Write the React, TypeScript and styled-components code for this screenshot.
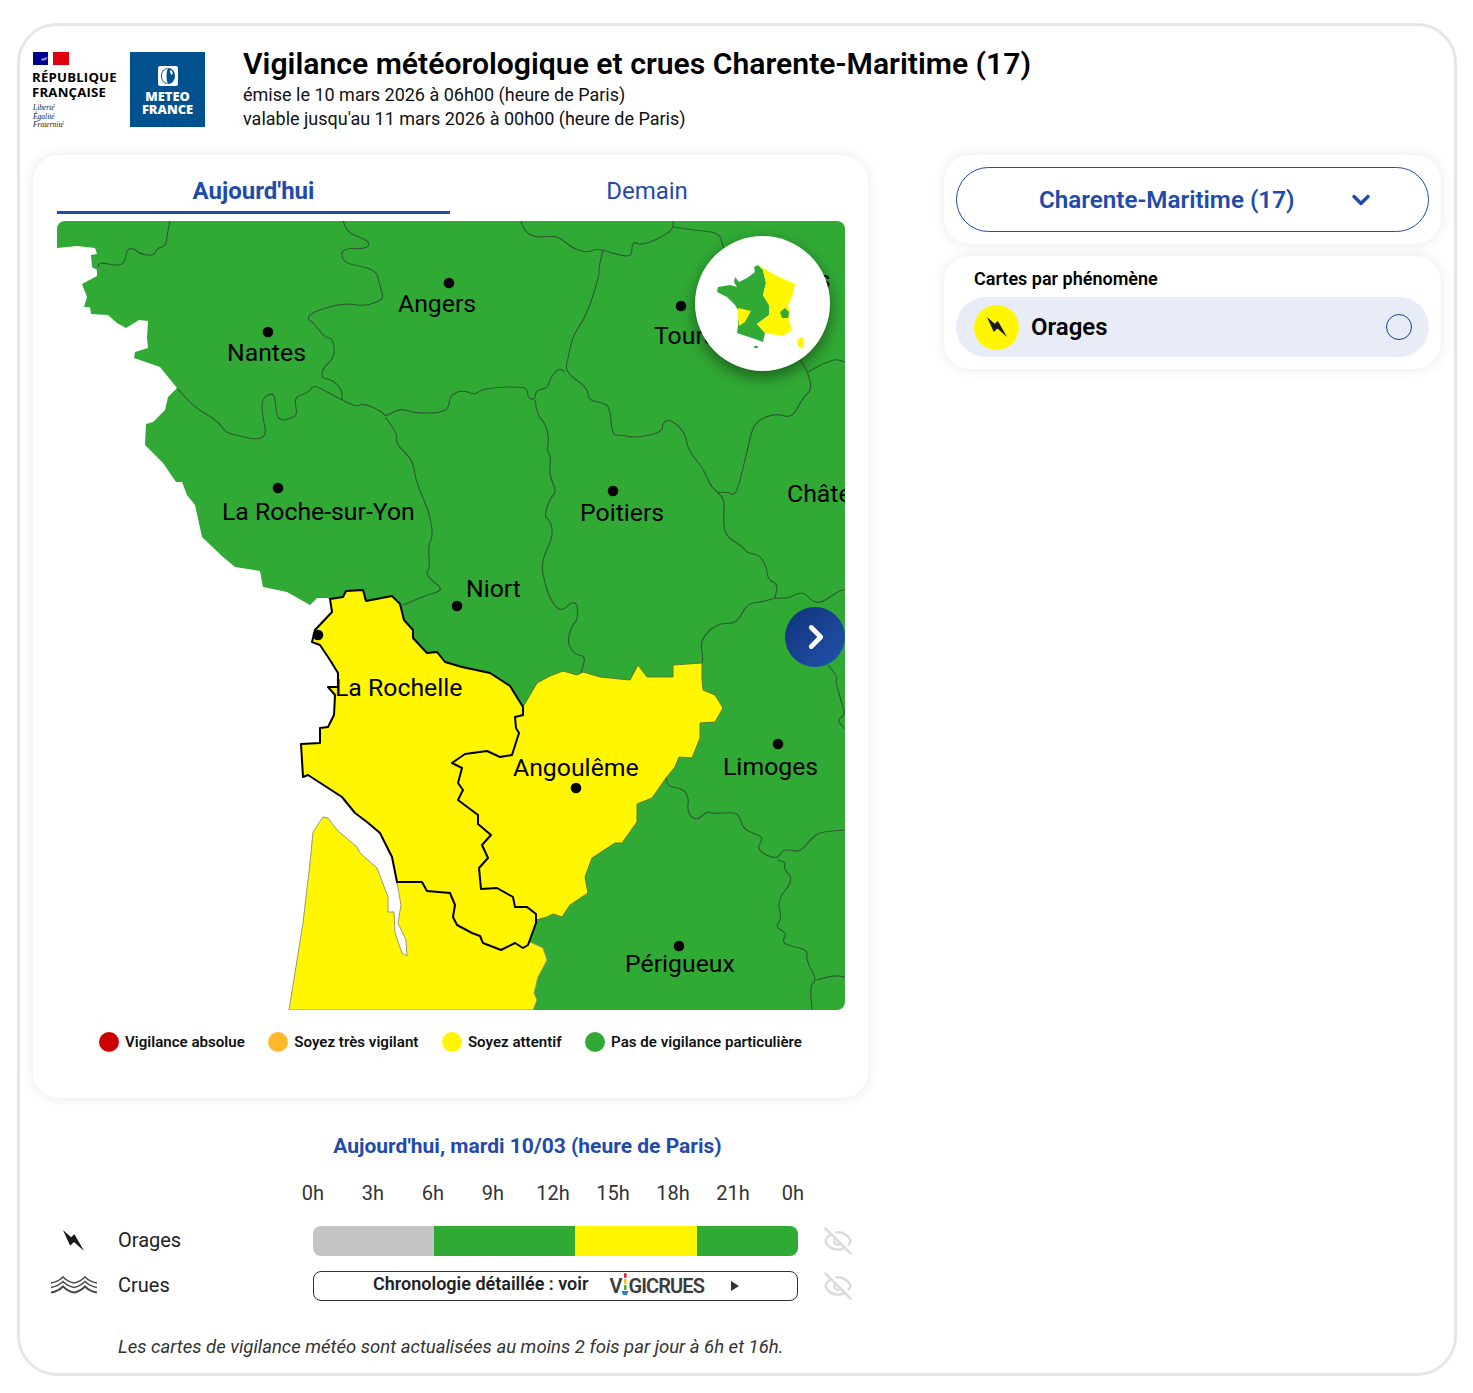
import React from 'react';
import styled, { createGlobalStyle } from 'styled-components';
import { ChevronDown, ChevronRight, EyeOff } from 'lucide-react';

// --- Colours ---

const BLUE = '#1f4bab';
const GREEN = '#31aa35';
const YELLOW = '#fff600';

// --- Map data, in page pixels (the svg viewBox starts at the map's corner) ---

const COAST =
  '57,221 845,221 845,1010 533,1010 400,700 328,598 317,598 310,605 287,592 263,587 260,571 235,567 223,557 202,537 195,505 187,495 182,482 176,482 163,463 145,445 146,424 153,422 165,410 168,397 177,388 160,367 134,358 135,352 148,348 147,338 148,321 139,320 126,328 117,323 108,315 91,314 90,307 84,307 87,297 82,284 97,276 97,270 92,267 91,255 97,254 95,248 77,246 57,248';

const GIRONDE =
  '397,882 422,882 427,891 450,893 455,905 453,917 457,925 472,933 480,936 483,943 501,950 515,943 523,948 528,945 530,942 543,948 547,960 538,977 534,993 537,1000 533,1010 289,1010 303,923 310,863 313,832 323,817 328,818 337,830 357,847 360,853 377,868 388,897 388,912 394,912 395,933 402,953 407,956 406,940 398,923 401,905';

const CHARENTE =
  '523,707 530,695 537,683 550,676 563,671 577,675 583,672 600,677 630,680 638,665 647,677 673,677 673,665 702,663 702,680 703,690 715,695 723,708 715,722 700,723 700,738 692,758 679,757 675,767 666,778 652,798 637,804 637,822 622,843 615,843 592,858 585,877 588,893 570,905 562,917 553,914 547,917 536,920 536,914 527,907 515,907 513,897 497,888 481,889 479,868 488,858 482,845 491,835 478,824 478,815 458,800 463,790 458,783 462,768 452,763 465,754 487,751 500,757 512,755 519,733 516,728 515,717 523,715';

const CHARENTE_MARITIME =
  '330,599 343,597 346,591 363,590 366,601 392,596 400,604 404,620 413,630 413,638 427,653 437,652 445,662 462,667 490,673 510,686 523,707 523,715 515,717 516,728 519,733 512,755 500,757 487,751 465,754 452,763 462,768 458,783 463,790 458,800 478,815 478,824 491,835 482,845 488,858 479,868 481,889 497,888 513,897 515,907 527,907 536,914 536,923 528,945 523,948 515,943 501,950 483,943 480,936 472,933 457,925 453,917 455,905 450,893 427,891 422,882 397,882 392,857 380,833 367,822 355,813 342,797 308,775 303,777 301,744 320,743 320,728 328,727 334,715 335,695 328,687 338,687 338,673 330,660 320,645 312,642 315,630 332,612';

const BORDERS = [
  '170,221 167,235 166,246 157,248 154,256 140,254 135,249 127,248 125,263 117,266 100,262 98,267',
  '343,221 347,232 357,236 370,242 367,249 341,248 343,263 365,267 377,272 380,287 384,298 375,303 363,306 343,303 312,312 307,319 313,322 325,338 333,338 335,357 323,368 321,378 333,380 342,390 342,400',
  '177,388 193,407 217,420 225,432 235,435 257,440 267,435 262,415 262,398 272,393 275,397 277,422 295,417 297,412 294,397 308,393 313,386 318,387 342,400 357,407 363,403 383,412 385,417 400,408 413,413 440,413 449,408 450,395 463,390 475,395 480,390 500,387 518,387 527,388 528,398 535,400 536,390 548,388 550,378 559,368 565,372',
  '385,417 398,433 395,443 413,460 415,478 423,498 430,515 433,537 428,545 430,568 425,575 442,588 438,592 427,595 403,605',
  '535,400 537,415 545,423 549,437 547,452 551,455 549,475 557,492 550,498 544,517 550,520 553,533 549,545 541,563 545,585 552,603 562,612 572,601 578,605 577,621 572,625 567,643 575,655 586,656 581,673',
  '521,221 523,230 535,238 557,235 572,248 588,253 597,248 622,256 632,256 632,241 643,246 673,231 673,221',
  '673,227 695,230 720,233 722,245 730,260',
  '603,250 598,270 600,273 587,315 573,335 568,358 565,372 588,388 588,400 603,403 610,407 612,435 620,435 637,438 663,432 662,423 670,419 685,432 688,450 703,468 710,485 717,492 725,500 723,525 727,537 743,547 747,553 760,555 767,568 768,580 778,584 775,598',
  '717,492 730,492 732,496 738,490 750,438 755,422 775,413 790,418 798,408 803,397 812,390 808,372 800,360',
  '808,372 832,358 845,362',
  '775,598 787,599 798,593 805,593 817,606 840,590 845,590',
  '775,598 763,602 747,603 737,624 717,623 700,640 703,657 702,663',
  '828,665 838,677 835,680 843,707 845,715 837,720 845,729',
  '666,778 667,787 682,788 689,797 687,813 697,821 707,811 713,814 735,812 740,817 743,828 752,833 764,837 756,850 777,860 782,850 792,850 800,852 812,838 820,832 845,830',
  '777,860 787,862 783,868 794,880 777,900 782,918 775,927 787,933 782,942 790,946 808,950 806,960 817,980 810,985 812,1010',
  '817,980 833,975 845,977',
];

const CITIES = [
  { name: 'Nantes', dot: [268, 332], label: [227, 361] },
  { name: 'Angers', dot: [449, 283], label: [398, 312] },
  { name: 'Tours', dot: [681, 306], label: [654, 344] },
  { name: 'Blois', dot: [790, 262], label: [776, 288] },
  { name: 'La Roche-sur-Yon', dot: [278, 488], label: [222, 520] },
  { name: 'Poitiers', dot: [613, 491], label: [580, 521] },
  { name: 'Châteauroux', dot: [880, 470], label: [787, 502] },
  { name: 'Niort', dot: [457, 606], label: [466, 597] },
  { name: 'La Rochelle', dot: [318, 635], label: [335, 696] },
  { name: 'Angoulême', dot: [576, 788], label: [513, 776] },
  { name: 'Limoges', dot: [778, 744], label: [723, 775] },
  { name: 'Périgueux', dot: [679, 946], label: [625, 972] },
];

const LEGEND = [
  { color: '#cc0000', label: 'Vigilance absolue' },
  { color: '#ffb82b', label: 'Soyez très vigilant' },
  { color: YELLOW, label: 'Soyez attentif' },
  { color: GREEN, label: 'Pas de vigilance particulière' },
];

const HOURS = ['0h', '3h', '6h', '9h', '12h', '15h', '18h', '21h', '0h'];

const SEGMENTS = [
  { color: '#c4c4c4', width: 121 },
  { color: GREEN, width: 141 },
  { color: YELLOW, width: 122 },
  { color: GREEN, width: 101 },
];

// rounds the corners of a traced line, the way the real map's borders look
const smoothLine = (points: string) => {
  const p = points.split(' ').map((pair) => pair.split(',').map(Number));
  let d = `M${p[0][0]} ${p[0][1]}`;
  for (let i = 1; i < p.length - 1; i++) {
    const midX = (p[i][0] + p[i + 1][0]) / 2;
    const midY = (p[i][1] + p[i + 1][1]) / 2;
    d += ` Q${p[i][0]} ${p[i][1]} ${midX} ${midY}`;
  }
  return `${d} L${p[p.length - 1][0]} ${p[p.length - 1][1]}`;
};

// --- Styled Components ---

const GlobalStyle = createGlobalStyle`
  body {
    margin: 0;
    background: #ffffff;
    font-family: Roboto, "Liberation Sans", sans-serif;
    color: #000000;
  }
`;

const Frame = styled.main`
  box-sizing: border-box;
  width: 1440px;
  height: 1353px;
  margin: 23px 0 0 17px;
  padding: 23px 13px 0;
  border: 3px solid #e6e6e6;
  border-radius: 40px;
`;

const Header = styled.header`
  display: flex;
  height: 106px;
`;

const Logos = styled.div`
  display: flex;
  gap: 13px;
  width: 210px;
  padding-top: 3px;
`;

const RepublicLogo = styled.div`
  width: 84px;
  display: flex;
  flex-direction: column;
`;

const RepublicName = styled.div`
  margin: 5px 0 0 -1px;
  font-family: "Open Sans", sans-serif;
  font-weight: 700;
  font-size: 13.2px;
  line-height: 14.5px;
  letter-spacing: 0.2px;
  white-space: nowrap;
`;

const Motto = styled.div`
  margin-top: 5px;
  font-family: "Liberation Serif", serif;
  font-style: italic;
  font-size: 7.5px;
  line-height: 8.5px;
  color: #222222;
`;

const MeteoLogo = styled.div`
  width: 75px;
  height: 75px;
  background: #00528f;
  color: #ffffff;
  display: flex;
  flex-direction: column;
  align-items: center;
  padding-top: 14px;
  box-sizing: border-box;
`;

const MeteoName = styled.div`
  margin-top: 4px;
  font-family: "Open Sans", sans-serif;
  font-weight: 800;
  font-size: 12.9px;
  line-height: 12.5px;
  text-align: center;
`;

const HeaderText = styled.div`
  display: flex;
  flex-direction: column;
  margin-top: -4px;
`;

const Title = styled.h1`
  margin: 0;
  font-size: 30.15px;
  line-height: 38px;
  font-weight: 600;
`;

const SubTitle = styled.div`
  font-size: 18px;
  line-height: 24px;
  color: #111111;
`;

const Columns = styled.div`
  display: grid;
  grid-template-columns: 835px 497px;
  column-gap: 76px;
`;

const LeftColumn = styled.div`
  display: flex;
  flex-direction: column;
`;

const RightColumn = styled.aside`
  display: flex;
  flex-direction: column;
  gap: 12px;
`;

const Card = styled.section`
  background: #ffffff;
  border-radius: 26px;
  box-shadow: 0 0 14px rgba(0, 0, 0, 0.09);
`;

const MapCard = styled(Card)`
  height: 943px;
  box-sizing: border-box;
  padding: 19px 23px 0 24px;
`;

const Tabs = styled.div`
  display: grid;
  grid-template-columns: 393px 394px;
  margin-bottom: 7px;
`;

const Tab = styled.div<{ $active?: boolean }>`
  box-sizing: border-box;
  height: 40px;
  padding-bottom: 4px;
  display: flex;
  align-items: center;
  justify-content: center;
  color: ${BLUE};
  font-size: 24px;
  font-weight: ${(p) => (p.$active ? 700 : 400)};
  border-bottom: 3px solid ${(p) => (p.$active ? BLUE : 'transparent')};
`;

const MapArea = styled.div`
  position: relative;
  width: 788px;
  height: 789px;
  border-radius: 8px;
  overflow: hidden;
  background: #ffffff;
`;

const MapSvg = styled.svg`
  display: block;
`;

const CityName = styled.text`
  font-family: Roboto, sans-serif;
  font-size: 24.8px;
  fill: #000000;
`;

const MiniMap = styled.div`
  position: absolute;
  top: 15px;
  right: 15px;
  width: 135px;
  height: 135px;
  border-radius: 50%;
  background: #ffffff;
  box-shadow: 0 6px 16px rgba(0, 0, 0, 0.45);
`;

const NextButton = styled.button`
  position: absolute;
  top: 386px;
  right: 0;
  width: 60px;
  height: 60px;
  padding: 0 0 0 2px;
  border: none;
  border-radius: 50%;
  display: flex;
  align-items: center;
  justify-content: center;
  color: #ffffff;
  background: linear-gradient(135deg, #0f3279, #2353ae);
`;

const Legend = styled.div`
  display: flex;
  padding: 22px 0 0 42px;
  gap: 23.5px;
`;

const LegendItem = styled.div`
  display: flex;
  align-items: center;
  gap: 6px;
  font-size: 15.1px;
  font-weight: 600;
  color: #111111;
`;

const LegendDot = styled.span<{ $color: string }>`
  width: 20px;
  height: 20px;
  border-radius: 50%;
  background: ${(p) => p.$color};
`;

const ChartTitle = styled.h2`
  margin: 35px 0 0;
  padding-left: 154px;
  text-align: center;
  color: ${BLUE};
  font-size: 21px;
  line-height: 26px;
  font-weight: 700;
`;

const HourRow = styled.div`
  display: flex;
  margin: 21px 0 0 250px;
`;

const Hour = styled.span`
  width: 60px;
  text-align: center;
  font-size: 20px;
  line-height: 26px;
  color: #333333;
`;

const ChartRow = styled.div`
  display: grid;
  grid-template-columns: 85px 195px 485px 80px;
  align-items: center;
  height: 30px;
  margin-top: 15px;
  &:first-of-type {
    margin-top: 20px;
  }
`;

const RowIcon = styled.div`
  display: flex;
  justify-content: center;
  padding: 0 4px 2px 0;
`;

const RowLabel = styled.span`
  font-size: 20px;
  color: #222222;
  padding-bottom: 2px;
`;

const Track = styled.div`
  display: flex;
  height: 30px;
  border-radius: 8px;
  overflow: hidden;
`;

const Segment = styled.div<{ $color: string }>`
  background: ${(p) => p.$color};
`;

const CruesLink = styled.div`
  box-sizing: border-box;
  height: 30px;
  border: 1px solid #333333;
  border-radius: 8px;
  display: flex;
  align-items: center;
  padding: 0 0 5px 59px;
  font-size: 18px;
  font-weight: 600;
  color: #222222;
`;

const VigicruesLogo = styled.span`
  display: flex;
  align-items: center;
  margin: 5px 0 0 21px;
  font-size: 20px;
  font-weight: 600;
  letter-spacing: -0.9px;
  color: #3d3d3d;
`;

const Caret = styled.span`
  margin: 5px 0 0 27px;
  border-left: 8px solid #333333;
  border-top: 5.5px solid transparent;
  border-bottom: 5.5px solid transparent;
`;

const EyeCell = styled.div`
  display: flex;
  padding-left: 25px;
  color: #dcdcdc;
`;

const Note = styled.p`
  margin: 34px 0 0 85px;
  font-size: 18.55px;
  line-height: 24px;
  font-style: italic;
  color: #333333;
  white-space: nowrap;
`;

const SelectCard = styled(Card)`
  padding: 12px;
`;

const Select = styled.div`
  box-sizing: border-box;
  height: 65px;
  border: 1px solid ${BLUE};
  border-radius: 33px;
  display: flex;
  align-items: center;
  padding-left: 82px;
  color: ${BLUE};
  font-size: 24.2px;
  font-weight: 600;
`;

const SelectArrow = styled.span`
  display: flex;
  margin-left: 53px;
`;

const PhenomenonCard = styled(Card)`
  padding: 12px;
`;

const PhenomenonTitle = styled.h3`
  margin: 0 0 7px 18px;
  font-size: 18px;
  line-height: 22px;
  font-weight: 600;
`;

const PhenomenonRow = styled.div`
  height: 60px;
  border-radius: 30px;
  background: #e8ecf7;
  display: flex;
  align-items: center;
  padding: 0 17px 0 18px;
`;

const PhenomenonBadge = styled.span`
  width: 45px;
  height: 45px;
  border-radius: 50%;
  background: ${YELLOW};
  display: flex;
  align-items: center;
  justify-content: center;
`;

const PhenomenonName = styled.span`
  margin-left: 12px;
  flex: 1;
  font-size: 24px;
  font-weight: 600;
`;

const Radio = styled.span`
  box-sizing: border-box;
  width: 26px;
  height: 26px;
  border-radius: 50%;
  border: 1px solid #1c3f8f;
`;

// --- Icons ---

const BoltIcon = ({ size }: { size: number }) => (
  <svg width={size} height={size} viewBox="0 0 24 24" fill="#1a1a1a">
    <path d="M1 1 L9.5 8.5 L13 5.5 L23 23 L12.5 13.5 L8.5 17.5 Z" />
  </svg>
);

const WavesIcon = () => (
  <svg width="46" height="18" viewBox="0 0 46 18" fill="none" stroke="#4a4a4a" strokeWidth="1.6">
    <path d="M0 7 C6 6 9 4 12 1 C15 4 18 6 23 7 C28 6 31 4 34 1 C37 4 40 6 46 7" />
    <path d="M0 11.5 C6 10.5 9 8.5 12 5.5 C15 8.5 18 10.5 23 11.5 C28 10.5 31 8.5 34 5.5 C37 8.5 40 10.5 46 11.5" />
    <path d="M0 16.5 C6 15.5 9 13.5 12 10.5 C15 13.5 18 15.5 23 16.5 C28 15.5 31 13.5 34 10.5 C37 13.5 40 15.5 46 16.5" strokeWidth="2" />
  </svg>
);

const Flag = () => (
  <svg width="36" height="13" viewBox="0 0 36 13">
    <rect width="36" height="13" fill="#ffffff" />
    <rect width="15" height="13" fill="#000091" />
    <rect x="20" width="16" height="13" fill="#e1000f" />
    <path d="M8 7 L15 5 L13 8 L9 9 Z" fill="#8e8ec8" />
  </svg>
);

const MeteoMark = () => (
  <svg width="20" height="20" viewBox="0 0 20 20">
    <rect width="20" height="20" rx="2" fill="#ffffff" />
    <ellipse cx="10" cy="10" rx="7" ry="8" fill="#00528f" />
    <path d="M10 2.5 C5 3.5 4 7 4 10 C4 13 5 16.5 10 17.5 C8 14 8 6 10 2.5 Z M12 4 C15 5 15.5 8 13.5 9 C12.5 8 12 6 12 4 Z" fill="#ffffff" />
  </svg>
);

const VigiPin = () => (
  <svg width="8" height="24" viewBox="0 0 8 24" style={{ margin: '-3px 0 0 -1px' }}>
    <rect x="3" y="0" width="2.6" height="5" rx="1.3" fill="#d8232a" />
    <rect x="3" y="6" width="2.6" height="5" fill="#f2c318" />
    <rect x="3" y="12" width="2.6" height="5" fill="#55ad3a" />
    <path d="M0.5 18 H7.5 L6 22 H2 Z" fill="#2f7fc1" />
  </svg>
);

const FranceMap = () => (
  <svg width="135" height="135" viewBox="695 236 135 135">
    <polygon
      fill={GREEN}
      points="758,265 754,267 755,272 747,278 739,282 735,277 734,282 737,287 730,285 718,287 717,292 727,297 735,305 739,312 738,325 737,333 752,338 763,342 765,333 757,324 769,315 769,305 763,295 766,283 763,270"
    />
    <polygon
      fill={YELLOW}
      points="758,265 763,270 766,283 763,295 769,305 769,315 757,324 765,333 783,336 792,330 789,320 790,312 788,305 792,297 795,284 775,275"
    />
    <polygon fill={GREEN} points="785,308 789,312 788,318 782,318 780,312" />
    <polygon fill={YELLOW} points="738,308 751,311 745,322 739,326 738,315" />
    <polygon fill={YELLOW} points="802,337 804,340 803,349 798,346 797,340" />
    <ellipse cx="756" cy="347" rx="2" ry="1.2" fill={GREEN} />
  </svg>
);

const DepartmentMap = () => (
  <MapSvg width="788" height="789" viewBox="57 221 788 789">
    <polygon points={COAST} fill={GREEN} />
    <polygon points={GIRONDE} fill={YELLOW} stroke="#9a9a70" strokeWidth="1" />
    <polygon points={CHARENTE} fill={YELLOW} stroke="#5f7a2c" strokeWidth="1" />
    {BORDERS.map((points) => (
      <path key={points} d={smoothLine(points)} fill="none" stroke="#2c5a33" strokeWidth="1.1" />
    ))}
    <polygon points={CHARENTE_MARITIME} fill={YELLOW} stroke="#000000" strokeWidth="2" strokeLinejoin="round" />
    {CITIES.map((city) => (
      <g key={city.name}>
        <circle cx={city.dot[0]} cy={city.dot[1]} r="5.3" fill="#000000" />
        <CityName x={city.label[0]} y={city.label[1]}>
          {city.name}
        </CityName>
      </g>
    ))}
  </MapSvg>
);

// --- Page ---

export default function App() {
  return (
    <>
      <GlobalStyle />
      <Frame>
        <Header>
          <Logos>
            <RepublicLogo>
              <Flag />
              <RepublicName>
                RÉPUBLIQUE
                <br />
                FRANÇAISE
              </RepublicName>
              <Motto>
                Liberté
                <br />
                Égalité
                <br />
                Fraternité
              </Motto>
            </RepublicLogo>
            <MeteoLogo>
              <MeteoMark />
              <MeteoName>
                METEO
                <br />
                FRANCE
              </MeteoName>
            </MeteoLogo>
          </Logos>
          <HeaderText>
            <Title>Vigilance météorologique et crues Charente-Maritime (17)</Title>
            <SubTitle>émise le 10 mars 2026 à 06h00 (heure de Paris)</SubTitle>
            <SubTitle>valable jusqu'au 11 mars 2026 à 00h00 (heure de Paris)</SubTitle>
          </HeaderText>
        </Header>

        <Columns>
          <LeftColumn>
            <MapCard>
              <Tabs>
                <Tab $active>Aujourd'hui</Tab>
                <Tab>Demain</Tab>
              </Tabs>
              <MapArea>
                <DepartmentMap />
                <MiniMap>
                  <FranceMap />
                </MiniMap>
                <NextButton aria-label="Suivant">
                  <ChevronRight size={38} strokeWidth={3} />
                </NextButton>
              </MapArea>
              <Legend>
                {LEGEND.map((item) => (
                  <LegendItem key={item.label}>
                    <LegendDot $color={item.color} />
                    {item.label}
                  </LegendItem>
                ))}
              </Legend>
            </MapCard>

            <ChartTitle>Aujourd'hui, mardi 10/03 (heure de Paris)</ChartTitle>
            <HourRow>
              {HOURS.map((hour, i) => (
                <Hour key={i}>{hour}</Hour>
              ))}
            </HourRow>
            <div>
              <ChartRow>
                <RowIcon>
                  <BoltIcon size={23} />
                </RowIcon>
                <RowLabel>Orages</RowLabel>
                <Track>
                  {SEGMENTS.map((segment, i) => (
                    <Segment key={i} $color={segment.color} style={{ width: segment.width }} />
                  ))}
                </Track>
                <EyeCell>
                  <EyeOff size={30} />
                </EyeCell>
              </ChartRow>
              <ChartRow>
                <RowIcon>
                  <WavesIcon />
                </RowIcon>
                <RowLabel>Crues</RowLabel>
                <CruesLink>
                  Chronologie détaillée : voir
                  <VigicruesLogo>
                    V
                    <VigiPin />
                    GICRUES
                  </VigicruesLogo>
                  <Caret />
                </CruesLink>
                <EyeCell>
                  <EyeOff size={30} />
                </EyeCell>
              </ChartRow>
            </div>
            <Note>Les cartes de vigilance météo sont actualisées au moins 2 fois par jour à 6h et 16h.</Note>
          </LeftColumn>

          <RightColumn>
            <SelectCard>
              <Select>
                Charente-Maritime (17)
                <SelectArrow>
                  <ChevronDown size={28} strokeWidth={3} />
                </SelectArrow>
              </Select>
            </SelectCard>
            <PhenomenonCard>
              <PhenomenonTitle>Cartes par phénomène</PhenomenonTitle>
              <PhenomenonRow>
                <PhenomenonBadge>
                  <BoltIcon size={22} />
                </PhenomenonBadge>
                <PhenomenonName>Orages</PhenomenonName>
                <Radio />
              </PhenomenonRow>
            </PhenomenonCard>
          </RightColumn>
        </Columns>
      </Frame>
    </>
  );
}
